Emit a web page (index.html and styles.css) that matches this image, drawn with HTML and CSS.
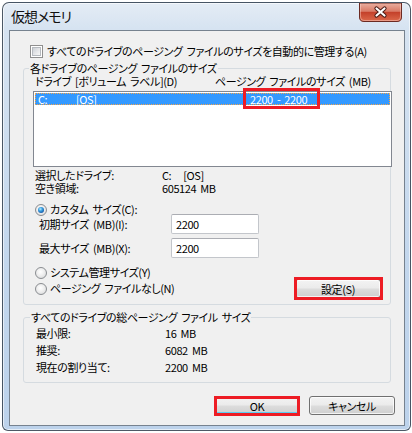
FILE: index.html
```html
<!DOCTYPE html>
<html lang="ja">
<head>
<meta charset="utf-8">
<title>仮想メモリ</title>
<link rel="stylesheet" href="styles.css">
</head>
<body>
<div class="window">
  <div class="titlebar">
    <span class="title">仮想メモリ</span>
    <div class="close">
      <svg width="43" height="19" viewBox="0 0 43 19">
        <defs>
          <linearGradient id="cg" x1="0" y1="0" x2="0" y2="1">
            <stop offset="0" stop-color="#eab0a2"/>
            <stop offset="0.45" stop-color="#d97a66"/>
            <stop offset="0.5" stop-color="#c4402a"/>
            <stop offset="1" stop-color="#dc6a4c"/>
          </linearGradient>
        </defs>
        <path d="M0.5,0 V14 Q0.5,18.5 5,18.5 H38 Q42.5,18.5 42.5,14 V0 Z" fill="url(#cg)" stroke="#6b2a22" stroke-width="1"/>
        <path d="M1.5,1 V14 Q1.5,17.5 5,17.5 H38 Q41.5,17.5 41.5,14 V1" fill="none" stroke="rgba(255,220,210,0.45)" stroke-width="1"/>
        <path d="M17.5,5.5 L25.5,12.5 M25.5,5.5 L17.5,12.5" stroke="#4a1a14" stroke-width="4.2" stroke-linecap="round"/>
        <path d="M17.5,5.5 L25.5,12.5 M25.5,5.5 L17.5,12.5" stroke="#ffffff" stroke-width="2.2" stroke-linecap="round"/>
      </svg>
    </div>
  </div>
  <div class="client">
    <div class="check-row"><span class="checkbox"></span><span class="check-label">すべてのドライブのページング ファイルのサイズを自動的に管理する(A)</span></div>

    <fieldset class="group g1">
      <legend>各ドライブのページング ファイルのサイズ</legend>
      <div class="g1-inner">
        <div class="cols"><span>ドライブ [ボリューム ラベル](D)</span><span>ページング ファイルのサイズ (MB)</span></div>
        <div class="listbox">
          <div class="lrow sel"><span>C:</span><span>[OS]</span><span>2200 - 2200</span></div>
        </div>
        <div class="info">
          <span>選択したドライブ:</span><span>C:<span class="gap"></span>[OS]</span>
          <span>空き領域:</span><span>605124 MB</span>
        </div>
        <div class="radio-row custom"><span class="radio on"></span><span>カスタム サイズ(C):</span></div>
        <div class="field first"><span class="flabel">初期サイズ (MB)(I):</span><div class="textbox">2200</div></div>
        <div class="field"><span class="flabel">最大サイズ (MB)(X):</span><div class="textbox">2200</div></div>
        <div class="radio-row sys"><span class="radio"></span><span>システム管理サイズ(Y)</span></div>
        <div class="radio-row last"><span class="radio"></span><span>ページング ファイルなし(N)</span><button class="btn set">設定(S)</button></div>
      </div>
    </fieldset>

    <fieldset class="group g2">
      <legend>すべてのドライブの総ページング ファイル サイズ</legend>
      <div class="totals">
        <span>最小限:</span><span>16 MB</span>
        <span>推奨:</span><span>6082 MB</span>
        <span>現在の割り当て:</span><span>2200 MB</span>
      </div>
    </fieldset>

    <div class="buttons">
      <button class="btn ok">OK</button>
      <button class="btn">キャンセル</button>
    </div>
  </div>
</div>

<div class="hl hl-value"></div>
<div class="hl hl-set"></div>
<div class="hl hl-ok"></div>
</body>
</html>
```

FILE: styles.css
```css
html, body {
  margin: 0;
  padding: 0;
}

body {
  width: 412px;
  height: 433px;
  overflow: hidden;
  background: #ffffff;
  position: relative;
  font-family: "Noto Sans CJK JP", "Noto Sans", sans-serif;
  font-size: 11px;
  letter-spacing: -0.4px;
  word-spacing: 2px;
  color: #000;
  font-feature-settings: "palt";
  white-space: nowrap;
}

.window {
  box-sizing: border-box;
  margin: 2px 0 0 2px;
  width: 409px;
  height: 429px;
  border: 1px solid rgba(40, 52, 66, 0.8);
  border-radius: 7px 7px 6px 6px;
  background: linear-gradient(to bottom, #e4ecf5 0, #d6e3f1 26px, #c3d7ed 60%, #bcd2eb 100%);
  box-shadow: inset 0 0 0 1px rgba(255, 255, 255, 0.6);
}

.titlebar {
  height: 27px;
  display: flex;
  align-items: flex-start;
  padding-left: 8px;
}

.title {
  font-size: 14px;
  letter-spacing: -1px;
  line-height: 18px;
  margin-top: 4px;
  color: #111;
}

.close {
  margin-left: auto;
  margin-right: 8px;
  width: 43px;
  height: 19px;
}

.close svg {
  display: block;
}

.client {
  box-sizing: border-box;
  margin: 0 5px 0 6px;
  width: 396px;
  height: 396px;
  border: 1px solid #76828f;
  background: #f0f0f0;
  padding-top: 14px;
}

/* checkbox */
.check-row {
  display: flex;
  align-items: center;
  height: 13px;
  margin-left: 20px;
  line-height: 13px;
}

.checkbox {
  box-sizing: border-box;
  width: 13px;
  height: 13px;
  border: 1px solid #8f8f8f;
  background: #fff;
  position: relative;
  margin-right: 4px;
  flex: none;
}

.checkbox::before {
  content: "";
  position: absolute;
  left: 1px;
  top: 1px;
  right: 1px;
  bottom: 1px;
  border: 1px solid #b6babf;
  background: linear-gradient(135deg, #cdd1d6 0%, #e8e9eb 60%, #f7f7f7 100%);
}

/* group boxes */
.group {
  margin: 0 0 0 13px;
  padding: 0;
  width: 368px;
  box-sizing: border-box;
  border: 1px solid #d5dbe0;
  border-radius: 3px;
  min-inline-size: 0;
}

.group legend {
  padding: 0 1px;
  line-height: 14px;
  height: 14px;
}

.g1 {
  margin-top: 3px;
}

.g1 legend {
  margin-left: 5px;
}

.g1-inner {
  padding: 0 0 6px 9px;
}

.cols {
  display: grid;
  grid-template-columns: 180px auto;
  line-height: 13px;
  height: 13px;
  padding-left: 2px;
}

.listbox {
  box-sizing: border-box;
  margin-top: 3px;
  width: 359px;
  height: 76px;
  border: 1px solid #828790;
  background: #fff;
  padding: 1px;
}

.lrow {
  box-sizing: border-box;
  height: 12px;
  display: grid;
  grid-template-columns: 38px 174px auto;
  padding-left: 2px;
  line-height: 10px;
}

.lrow.sel {
  background: #3399ff;
  color: #fff;
  border: 1px dotted #f5a54a;
}

.info {
  margin-top: 2px;
  padding-left: 2px;
  display: grid;
  grid-template-columns: 127px auto;
  line-height: 13px;
}

.gap {
  display: inline-block;
  width: 12px;
}

.radio-row {
  display: flex;
  align-items: center;
  height: 13px;
  line-height: 13px;
  padding-left: 2px;
}

.radio-row.custom {
  margin-top: 8px;
}

.radio-row.sys {
  margin-top: 8px;
}

.radio-row.last {
  height: 19px;
}

.radio {
  box-sizing: border-box;
  width: 12px;
  height: 12px;
  border-radius: 50%;
  border: 1px solid #8a8d91;
  background: radial-gradient(circle at 45% 40%, #ffffff 0%, #eeeeee 45%, #d2d4d6 100%);
  margin-right: 3px;
  position: relative;
  flex: none;
}

.radio.on::after {
  content: "";
  position: absolute;
  left: 2px;
  top: 2px;
  width: 6px;
  height: 6px;
  border-radius: 50%;
  background: radial-gradient(circle at 40% 35%, #b9ecff 0%, #3aa0e0 35%, #1659a8 75%, #0c3670 100%);
}

.field {
  display: flex;
  align-items: center;
  height: 20px;
  padding-left: 6px;
  margin-top: 4px;
}

.field.first {
  margin-top: -2px;
}

.flabel {
  width: 132px;
  flex: none;
}

.textbox {
  box-sizing: border-box;
  width: 88px;
  height: 20px;
  border: 1px solid #c3c6cb;
  border-top-color: #abadb3;
  border-radius: 2px;
  background: #fff;
  padding-left: 4px;
  line-height: 18px;
}

/* buttons */
.btn {
  box-sizing: border-box;
  width: 86px;
  height: 19px;
  padding: 0;
  border: 1px solid #707070;
  border-radius: 3px;
  background: linear-gradient(to bottom, #f3f3f3 0%, #ebebeb 48%, #dddddd 52%, #cfcfcf 100%);
  box-shadow: inset 0 0 0 1px rgba(255, 255, 255, 0.75);
  font-family: "Noto Sans CJK JP", "Noto Sans", sans-serif;
  font-size: 11px;
  letter-spacing: -0.4px;
  font-feature-settings: "palt";
  line-height: 16px;
  color: #000;
}

.btn.set {
  margin-left: auto;
  margin-right: 9px;
}

.btn.ok {
  border-color: #3c7fb1;
  box-shadow: inset 0 0 0 1px rgba(255, 255, 255, 0.8), inset 0 -2px 0 #5ccdf2;
}

.g2 {
  margin-top: 5px;
}

.g2 legend {
  margin-left: 6px;
}

.totals {
  margin-top: 1px;
  padding: 0 0 6px 12px;
  display: grid;
  grid-template-columns: 129px auto;
  line-height: 17px;
}

.buttons {
  display: flex;
  justify-content: flex-end;
  gap: 9px;
  margin-top: 13px;
  padding-right: 9px;
}

/* red annotation boxes over the screenshot */
.hl {
  position: absolute;
  box-sizing: border-box;
  border: 3px solid #ed1c24;
}

.hl-value {
  left: 243px;
  top: 88px;
  width: 77px;
  height: 21px;
}

.hl-set {
  left: 294px;
  top: 277px;
  width: 89px;
  height: 23px;
}

.hl-ok {
  left: 214px;
  top: 396px;
  width: 86px;
  height: 20px;
}
```
